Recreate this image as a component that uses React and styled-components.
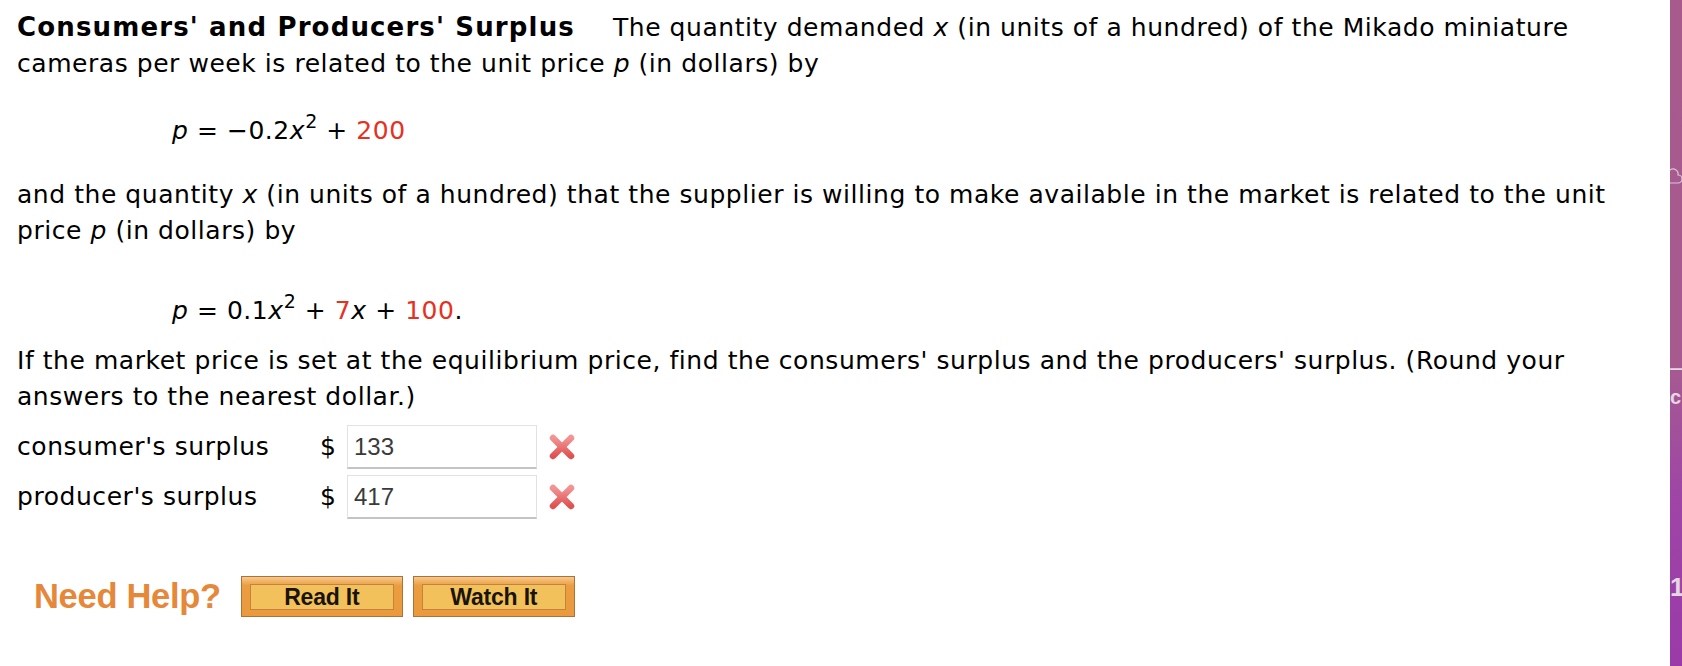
import styled, { createGlobalStyle } from "styled-components";

const GlobalStyle = createGlobalStyle`
  html, body {
    margin: 0;
    padding: 0;
    background: #fff;
  }
  body {
    font-family: "DejaVu Sans", Verdana, sans-serif;
    color: #000;
  }
`;

const Page = styled.div`
  display: flex;
  width: 1682px;
  height: 666px;
  overflow: hidden;
`;

const Main = styled.div`
  flex: 1;
  padding: 9px 0 0 17px;
  font-size: 25px;
  line-height: 36px;
  letter-spacing: 0.55px;
`;

const Para = styled.p`
  margin: ${(p) => p.$top || 0}px 0 0;
  white-space: nowrap;
`;

const Title = styled.b`
  font-weight: bold;
  font-size: 26px;
  letter-spacing: 1.15px;
  margin-right: 38px;
`;

const Equation = styled.div`
  margin: ${(p) => p.$top}px 0 0 155px;
  white-space: nowrap;
`;

const Var = styled.i`
  font-style: italic;
`;

const Sup = styled.sup`
  font-size: 19px;
  line-height: 0;
  vertical-align: 11px;
`;

const Red = styled.span`
  color: #e8301f;
`;

const Answers = styled.div`
  margin-top: 10px;
  display: flex;
  flex-direction: column;
  gap: 6px;
`;

const AnswerRow = styled.div`
  display: flex;
  align-items: center;
  height: 44px;
`;

const Label = styled.span`
  width: 303px;
`;

const Dollar = styled.span`
  width: 27px;
`;

const Field = styled.div`
  box-sizing: border-box;
  width: 190px;
  height: 44px;
  border: 1px solid #e2e2e2;
  border-bottom: 2px solid #c4c4c4;
  padding: 0 6px;
  display: flex;
  align-items: center;
  font-family: "Liberation Sans", Arial, sans-serif;
  font-size: 24px;
  letter-spacing: 0;
  color: #3a3a3a;
`;

const Mark = styled.svg`
  margin-left: 11px;
  width: 28px;
  height: 28px;
`;

const HelpRow = styled.div`
  margin: 57px 0 0 17px;
  display: flex;
  align-items: center;
  gap: 10px;
`;

const HelpText = styled.span`
  font-family: "Liberation Sans", Arial, sans-serif;
  font-weight: bold;
  font-size: 34.5px;
  line-height: 41px;
  color: #e5883a;
  margin-right: 10px;
  letter-spacing: -0.3px;
`;

const HelpButton = styled.button`
  box-sizing: border-box;
  width: 162px;
  height: 41px;
  padding: 7px 8px 6px;
  border: 1px solid #a9733a;
  background: linear-gradient(#f7c98c 0%, #ec9d40 22%, #ea9a3c 100%);
  display: flex;
  cursor: pointer;
`;

const ButtonFace = styled.span`
  flex: 1;
  display: flex;
  align-items: center;
  justify-content: center;
  border: 1px solid #c0843e;
  background: #f3c15b;
  font-family: "Liberation Sans", Arial, sans-serif;
  font-weight: bold;
  font-size: 23px;
  color: #1a1408;
  letter-spacing: -0.2px;
`;

const SideStrip = styled.div`
  width: 12px;
  height: 666px;
  background: linear-gradient(#a75a8b 0%, #a65a90 55%, #9e45a6 75%, #9a3aa8 100%);
  display: flex;
  flex-direction: column;
  align-items: flex-start;
  color: #e4d8e4;
  font-family: "Liberation Sans", Arial, sans-serif;
  font-weight: bold;
  overflow: hidden;
`;

const StripGlyph = styled.span`
  margin-top: ${(p) => p.$top}px;
  font-size: ${(p) => p.$size || 16}px;
  line-height: 1;
  height: ${(p) => p.$h || 16}px;
  display: block;
`;

const Cross = () => (
  <Mark viewBox="0 0 28 28">
    <defs>
      <linearGradient id="xg" x1="0" y1="0" x2="0" y2="1">
        <stop offset="0" stopColor="#f29494" />
        <stop offset="1" stopColor="#e05252" />
      </linearGradient>
    </defs>
    <g stroke="url(#xg)" strokeWidth="6.5" strokeLinecap="round">
      <line x1="5" y1="5" x2="23" y2="23" />
      <line x1="23" y1="5" x2="5" y2="23" />
    </g>
  </Mark>
);

export default function App() {
  return (
    <>
      <GlobalStyle />
      <Page>
        <Main>
          <Para>
            <Title>Consumers' and Producers' Surplus</Title>
            The quantity demanded <Var>x</Var> (in units of a hundred) of the Mikado miniature
            <br />
            cameras per week is related to the unit price <Var>p</Var> (in dollars) by
          </Para>
          <Equation $top={31}>
            <Var>p</Var> = −0.2<Var>x</Var>
            <Sup>2</Sup> + <Red>200</Red>
          </Equation>
          <Para $top={28}>
            and the quantity <Var>x</Var> (in units of a hundred) that the supplier is willing to make available in the market is related to the unit
            <br />
            price <Var>p</Var> (in dollars) by
          </Para>
          <Equation $top={44}>
            <Var>p</Var> = 0.1<Var>x</Var>
            <Sup>2</Sup> + <Red>7</Red>
            <Var>x</Var> + <Red>100</Red>.
          </Equation>
          <Para $top={14}>
            If the market price is set at the equilibrium price, find the consumers' surplus and the producers' surplus. (Round your
            <br />
            answers to the nearest dollar.)
          </Para>
          <Answers>
            <AnswerRow>
              <Label>consumer's surplus</Label>
              <Dollar>$</Dollar>
              <Field>133</Field>
              <Cross />
            </AnswerRow>
            <AnswerRow>
              <Label>producer's surplus</Label>
              <Dollar>$</Dollar>
              <Field>417</Field>
              <Cross />
            </AnswerRow>
          </Answers>
          <HelpRow>
            <HelpText>Need Help?</HelpText>
            <HelpButton>
              <ButtonFace>Read It</ButtonFace>
            </HelpButton>
            <HelpButton>
              <ButtonFace>Watch It</ButtonFace>
            </HelpButton>
          </HelpRow>
        </Main>
        <SideStrip>
          <StripGlyph $top={165}>
            <svg width="12" height="20" viewBox="0 0 12 20">
              <path
                d="M0 18 H8 A4 4 0 0 0 8 10 A5 5 0 0 0 0 5"
                fill="none"
                stroke="#d8c6d6"
                strokeWidth="1.2"
              />
            </svg>
          </StripGlyph>
          <StripGlyph $top={180} $size={16} $h={18}>
            —
          </StripGlyph>
          <StripGlyph $top={8} $size={20} $h={22}>
            c
          </StripGlyph>
          <StripGlyph $top={165} $size={26} $h={26}>
            1
          </StripGlyph>
        </SideStrip>
      </Page>
    </>
  );
}
